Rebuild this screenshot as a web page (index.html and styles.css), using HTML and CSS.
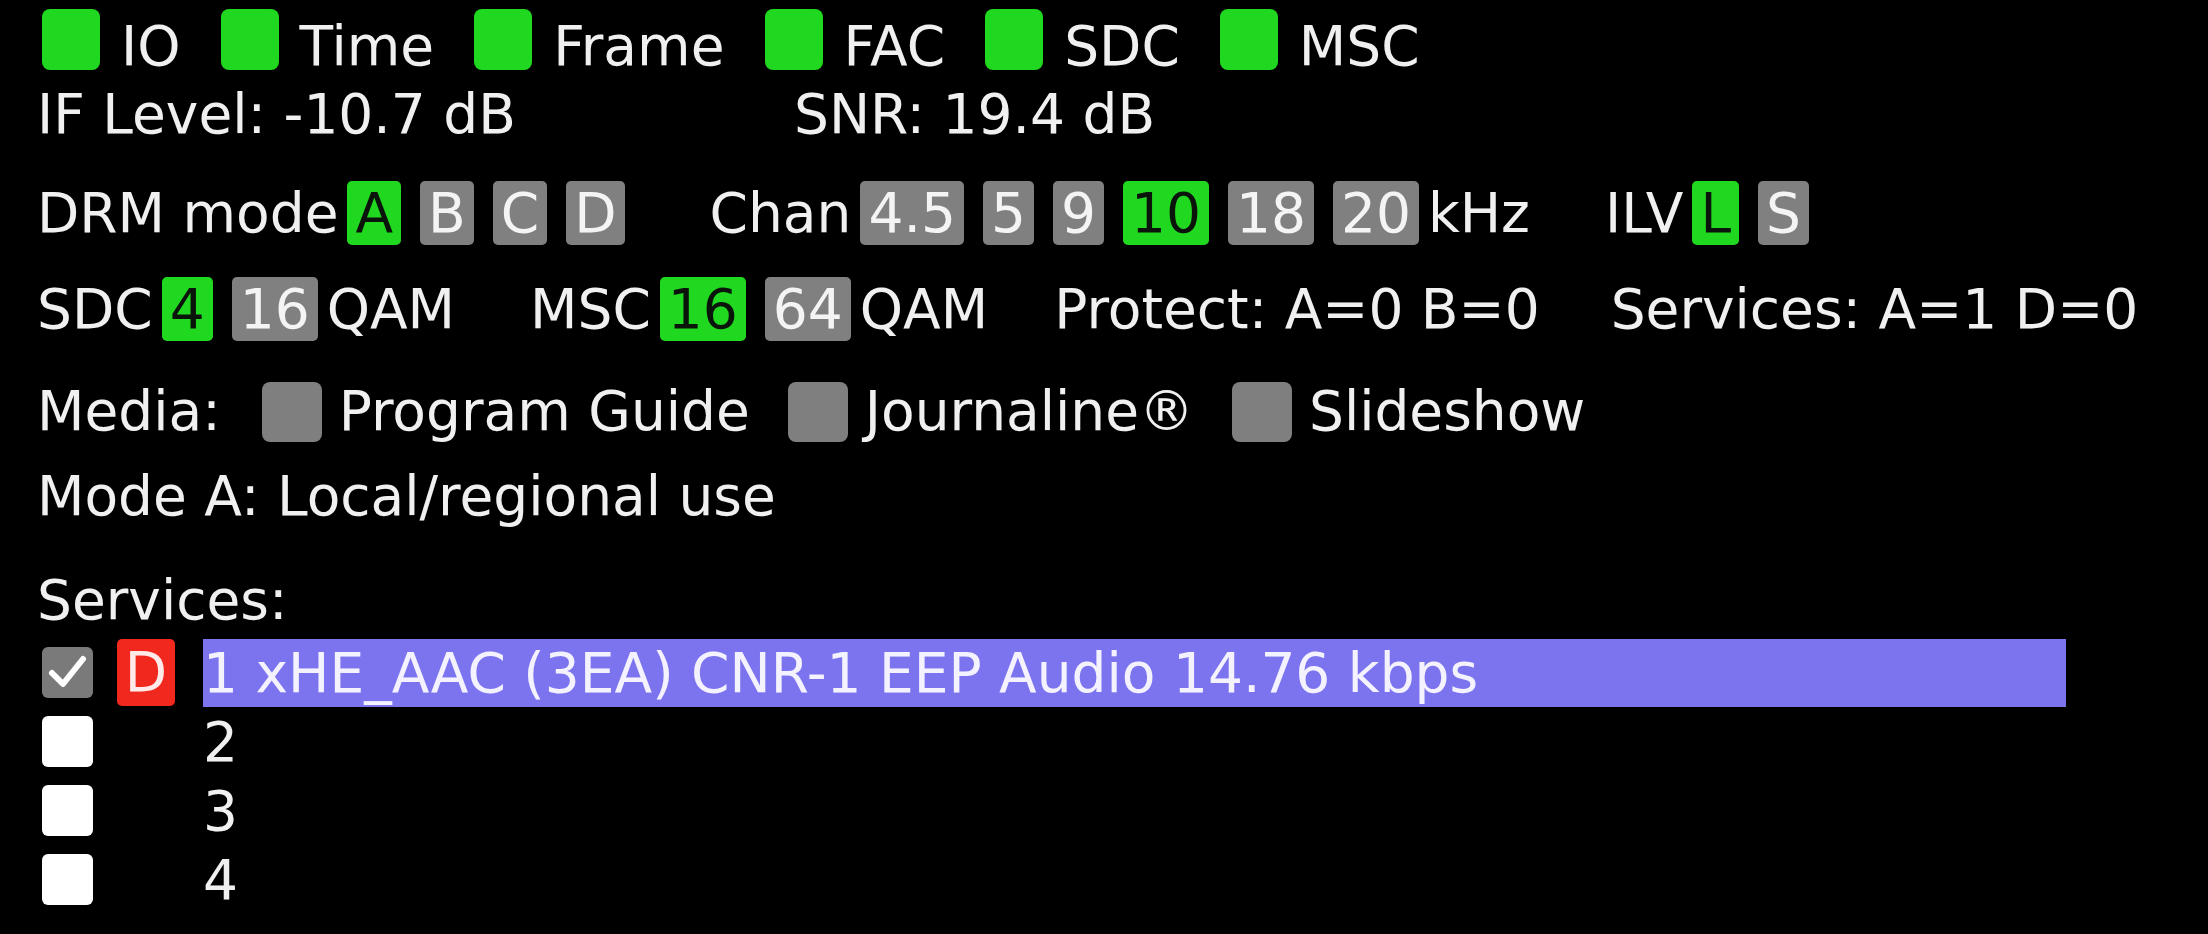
FILE: index.html
```html
<!DOCTYPE html>
<html lang="en">
<head>
<meta charset="utf-8">
<title>DRM status</title>
<link rel="stylesheet" href="styles.css">
</head>
<body>
<main class="panel">
  <div class="row status">
    <span class="ind"><span class="led"></span>IO</span>
    <span class="ind"><span class="led"></span>Time</span>
    <span class="ind"><span class="led"></span>Frame</span>
    <span class="ind"><span class="led"></span>FAC</span>
    <span class="ind"><span class="led"></span>SDC</span>
    <span class="ind"><span class="led"></span>MSC</span>
  </div>
  <div class="row levels">
    <span class="lvl">IF Level: -10.7 dB</span>
    <span>SNR: 19.4 dB</span>
  </div>
  <div class="row params r-mode">
    <span class="lbl">DRM mode</span>
    <span class="box on">A</span>
    <span class="box">B</span>
    <span class="box">C</span>
    <span class="box">D</span>
    <span class="lbl chan">Chan</span>
    <span class="box">4.5</span>
    <span class="box">5</span>
    <span class="box">9</span>
    <span class="box on">10</span>
    <span class="box">18</span>
    <span class="box">20</span>
    <span class="lbl">kHz</span>
    <span class="lbl ilv">ILV</span>
    <span class="box on">L</span>
    <span class="box">S</span>
  </div>
  <div class="row params r-qam">
    <span class="lbl">SDC</span>
    <span class="box on">4</span>
    <span class="box">16</span>
    <span class="lbl">QAM</span>
    <span class="lbl msc">MSC</span>
    <span class="box on">16</span>
    <span class="box">64</span>
    <span class="lbl">QAM</span>
    <span class="lbl prot">Protect: A=0 B=0</span>
    <span class="lbl svcs">Services: A=1 D=0</span>
  </div>
  <div class="row media">
    <span class="lbl">Media:</span>
    <span class="mi"><span class="led off"></span>Program Guide</span>
    <span class="mi"><span class="led off"></span>Journaline®</span>
    <span class="mi"><span class="led off"></span>Slideshow</span>
  </div>
  <div class="row mode-desc">
    <span>Mode A: Local/regional use</span>
  </div>
  <div class="row svc-head">
    <span>Services:</span>
  </div>
  <div class="svc-list">
    <div class="svc">
      <span class="chk checked"><svg viewBox="0 0 51 51" width="51" height="51"><polyline points="10,26 21,37 41,12" fill="none" stroke="#ffffff" stroke-width="6" stroke-linecap="round" stroke-linejoin="round"/></svg></span>
      <span class="badge-slot"><span class="badge">D</span></span>
      <span class="svc-name sel">1 xHE_AAC (3EA) CNR-1 EEP Audio 14.76 kbps</span>
    </div>
    <div class="svc">
      <span class="chk"></span>
      <span class="badge-slot"></span>
      <span class="svc-name">2</span>
    </div>
    <div class="svc">
      <span class="chk"></span>
      <span class="badge-slot"></span>
      <span class="svc-name">3</span>
    </div>
    <div class="svc">
      <span class="chk"></span>
      <span class="badge-slot"></span>
      <span class="svc-name">4</span>
    </div>
  </div>
</main>
</body>
</html>
```
FILE: styles.css
```css
html, body {
  margin: 0;
  padding: 0;
  background: #000;
}

body {
  font-family: "DejaVu Sans", Verdana, sans-serif;
  font-size: 55px;
  color: #f0f0f0;
}

.panel {
  padding: 9px 0 0 37px;
}

.row {
  display: flex;
  align-items: baseline;
  line-height: 68px;
  white-space: nowrap;
}

.row > * {
  flex: none;
}

/* status indicators */
.led {
  display: inline-block;
  width: 58px;
  height: 61px;
  border-radius: 8px;
  background: #20d820;
  vertical-align: -5px;
  margin-right: 21px;
}

.status .ind:first-child {
  margin-left: 5px;
}

.status .ind + .ind {
  margin-left: 40px;
}

/* levels */
.lvl {
  width: 757px;
}

/* parameter rows */
.r-mode {
  margin-top: 31px;
}

.r-qam {
  margin-top: 28px;
}

.box {
  line-height: 64px;
  padding: 0 8px;
  border-radius: 5px;
  background: #808080;
  color: #f4f4f4;
  margin-left: 9px;
}

.box + .box {
  margin-left: 19px;
}

.box.on {
  background: #20d820;
  color: #0a140a;
}

.box + .lbl {
  margin-left: 9px;
}

.lbl.chan {
  margin-left: 85px;
}

.lbl.ilv {
  margin-left: 75px;
}

.lbl.msc {
  margin-left: 75px;
}

.lbl.prot {
  margin-left: 66px;
}

.lbl.svcs {
  margin-left: 71px;
}

/* media */
.media {
  margin-top: 34px;
}

.media .led.off {
  width: 60px;
  height: 60px;
  background: #7f7f7f;
  vertical-align: -12px;
  margin-right: 17px;
}

.media .mi {
  margin-left: 38px;
}

.media .lbl + .mi {
  margin-left: 41px;
}

.mode-desc {
  margin-top: 17px;
}

.svc-head {
  margin-top: 36px;
}

/* services list */
.svc-list {
  margin-top: 4px;
}

.svc {
  display: flex;
  align-items: center;
  height: 69px;
  white-space: nowrap;
}

.chk {
  flex: none;
  width: 51px;
  height: 51px;
  border-radius: 6px;
  background: #ffffff;
  margin-left: 5px;
  margin-right: 24px;
}

.chk.checked {
  background: #7a7a7a;
  display: flex;
}

.badge-slot {
  flex: none;
  width: 58px;
  margin-right: 28px;
}

.badge {
  display: block;
  height: 67px;
  line-height: 67px;
  border-radius: 5px;
  background: #f0281e;
  color: #ffeaea;
  text-align: center;
}

.svc-name {
  height: 68px;
  line-height: 68px;
}

.svc-name.sel {
  width: 1863px;
  background: #7c74ee;
  color: #f4f2ff;
}
```
